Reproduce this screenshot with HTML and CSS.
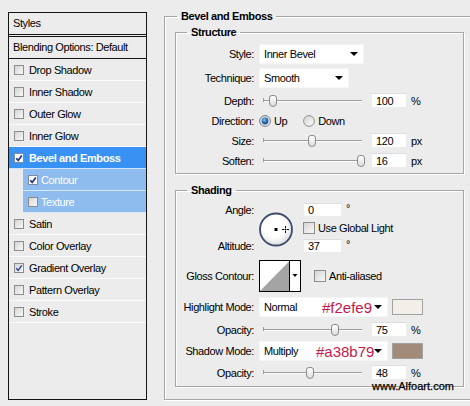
FILE: index.html
```html
<!DOCTYPE html>
<html>
<head>
<meta charset="utf-8">
<link rel="stylesheet" href="styles.css">
</head>
<body>
<div class="page">
  <div class="styles-panel">
    <div class="panel-head">Styles</div>
    <div class="panel-blend">Blending Options: Default</div>
    <div class="style-row"><span class="cb"></span>Drop Shadow</div>
    <div class="style-row"><span class="cb"></span>Inner Shadow</div>
    <div class="style-row"><span class="cb"></span>Outer Glow</div>
    <div class="style-row"><span class="cb"></span>Inner Glow</div>
    <div class="style-row sel"><span class="cb on"><svg viewBox="0 0 8 8" width="8" height="8"><path d="M1.2 4.2 L3.2 6.4 L6.8 1.4" fill="none" stroke="#1d3284" stroke-width="1.7"/></svg></span>Bevel and Emboss</div>
    <div class="style-row sub"><span class="cb on"><svg viewBox="0 0 8 8" width="8" height="8"><path d="M1.2 4.2 L3.2 6.4 L6.8 1.4" fill="none" stroke="#1d3284" stroke-width="1.7"/></svg></span>Contour</div>
    <div class="style-row sub"><span class="cb"></span>Texture</div>
    <div class="style-row"><span class="cb"></span>Satin</div>
    <div class="style-row"><span class="cb"></span>Color Overlay</div>
    <div class="style-row"><span class="cb"><svg viewBox="0 0 8 8" width="8" height="8"><path d="M1.2 4.2 L3.2 6.4 L6.8 1.4" fill="none" stroke="#2a4a9a" stroke-width="1.5"/></svg></span>Gradient Overlay</div>
    <div class="style-row"><span class="cb"></span>Pattern Overlay</div>
    <div class="style-row"><span class="cb"></span>Stroke</div>
  </div>

  <fieldset class="group outer">
    <legend>Bevel and Emboss</legend>

    <fieldset class="group inner structure">
      <legend>Structure</legend>
      <div class="row h20 first">
        <span class="lbl">Style:</span>
        <div class="select w-style"><span>Inner Bevel</span><i class="arrow"></i></div>
      </div>
      <div class="row h20 gap4">
        <span class="lbl">Technique:</span>
        <div class="select w-tech"><span>Smooth</span><i class="arrow"></i></div>
      </div>
      <div class="row h15 gap5">
        <span class="lbl">Depth:</span>
        <div class="slider"><span class="thumb" style="left:10px"></span></div>
        <span class="num">100</span><span class="unit">%</span>
      </div>
      <div class="row h15 gap5">
        <span class="lbl">Direction:</span>
        <svg class="radio" width="12" height="12" viewBox="0 0 12 12">
          <defs>
            <radialGradient id="rb" cx="0.4" cy="0.35" r="0.7"><stop offset="0" stop-color="#8fc3ef"/><stop offset="0.5" stop-color="#2b74b8"/><stop offset="1" stop-color="#0f3f70"/></radialGradient>
            <linearGradient id="rg" x1="0" y1="0" x2="1" y2="1"><stop offset="0" stop-color="#d4d4d4"/><stop offset="1" stop-color="#fbfbfb"/></linearGradient>
          </defs>
          <circle cx="6" cy="6" r="5.4" fill="url(#rg)" stroke="#6f7b8c" stroke-width="1"/>
          <circle cx="6" cy="6" r="3.4" fill="url(#rb)"/>
        </svg>
        <span class="radio-text">Up</span>
        <svg class="radio down" width="12" height="12" viewBox="0 0 12 12">
          <circle cx="6" cy="6" r="5.4" fill="url(#rg)" stroke="#8f8f8f" stroke-width="1"/>
        </svg>
        <span class="radio-text">Down</span>
      </div>
      <div class="row h15 gap5">
        <span class="lbl">Size:</span>
        <div class="slider"><span class="thumb" style="left:49px"></span></div>
        <span class="num">120</span><span class="unit">px</span>
      </div>
      <div class="row h15 gap5">
        <span class="lbl">Soften:</span>
        <div class="slider"><span class="thumb" style="left:98px"></span></div>
        <span class="num">16</span><span class="unit">px</span>
      </div>
    </fieldset>

    <fieldset class="group inner shading">
      <legend>Shading</legend>
      <div class="angle">
        <div class="angle-labels">
          <span>Angle:</span>
          <span>Altitude:</span>
        </div>
        <svg class="dial" width="36" height="36" viewBox="0 0 36 36">
          <defs>
            <radialGradient id="dg" cx="0.45" cy="0.4" r="0.6"><stop offset="0.6" stop-color="#ffffff"/><stop offset="1" stop-color="#d9dbe0"/></radialGradient>
          </defs>
          <circle cx="18" cy="17.5" r="16" fill="url(#dg)" stroke="#3e4c6b" stroke-width="1.8"/>
          <rect x="16.5" y="16" width="3" height="3" fill="#000"/>
          <g stroke="#000" stroke-width="1">
            <line x1="24" y1="17.5" x2="26.5" y2="17.5"/>
            <line x1="28.5" y1="17.5" x2="31" y2="17.5"/>
            <line x1="27.5" y1="14" x2="27.5" y2="16.5"/>
            <line x1="27.5" y1="18.5" x2="27.5" y2="21"/>
          </g>
          <rect x="27" y="17" width="1" height="1" fill="#000"/>
        </svg>
        <div class="angle-fields">
          <div class="row h14"><span class="num wide">0</span><span class="unit deg">°</span></div>
          <div class="row h14"><span class="cb big"></span><span class="cb-text">Use Global Light</span></div>
          <div class="row h14"><span class="num wide">37</span><span class="unit deg">°</span></div>
        </div>
      </div>
      <div class="row gloss">
        <span class="lbl">Gloss Contour:</span>
        <svg class="contour" width="42" height="32" viewBox="0 0 42 32">
          <rect x="0.5" y="0.5" width="41" height="31" fill="#fff" stroke="#000"/>
          <polygon points="1,31 30,1.5 30,31" fill="#a4a4a4"/>
          <line x1="30.5" y1="0.5" x2="30.5" y2="31.5" stroke="#000"/>
          <polygon points="33.5,14 38.5,14 36,17" fill="#000"/>
        </svg>
        <span class="cb big anti"></span><span class="cb-text">Anti-aliased</span>
      </div>
      <div class="row h20 gap5">
        <span class="lbl">Highlight Mode:</span>
        <div class="select w-mode"><span>Normal</span><span class="hex hex1">#f2efe9</span><i class="arrow"></i></div>
        <span class="swatch sw1"></span>
      </div>
      <div class="row h15 gap5">
        <span class="lbl">Opacity:</span>
        <div class="slider"><span class="thumb" style="left:72px"></span></div>
        <span class="num">75</span><span class="unit">%</span>
      </div>
      <div class="row h20 gap4">
        <span class="lbl">Shadow Mode:</span>
        <div class="select w-mode"><span>Multiply</span><span class="hex hex2">#a38b79</span><i class="arrow"></i></div>
        <span class="swatch sw2"></span>
      </div>
      <div class="row h15 gap4">
        <span class="lbl">Opacity:</span>
        <div class="slider"><span class="thumb" style="left:47px"></span></div>
        <span class="num">48</span><span class="unit">%</span>
      </div>
    </fieldset>
  </fieldset>
</div>
<div class="watermark">www.Alfoart.com</div>
</body>
</html>
```

FILE: styles.css
```css
* { box-sizing: border-box; }
html, body { margin: 0; padding: 0; }
body {
  position: relative;
  width: 470px;
  height: 406px;
  overflow: hidden;
  background: #ececec;
  font-family: "Liberation Sans", Arial, sans-serif;
  font-size: 11px;
  letter-spacing: -0.4px;
  color: #000;
}
.page { display: flex; align-items: flex-start; }

/* left styles list */
.styles-panel {
  flex: none;
  margin: 12px 0 0 8px;
  width: 139px;
  height: 388px;
  border: 1px solid #141414;
  background: #ececec;
}
.panel-head {
  height: 24px;
  line-height: 21px;
  padding-left: 4px;
  border-bottom: 3px double #141414;
}
.panel-blend {
  height: 22px;
  line-height: 21px;
  padding-left: 4px;
  border-bottom: 1px solid #141414;
}
.style-row {
  display: flex;
  align-items: center;
  gap: 5px;
  height: 22px;
  padding-left: 5px;
  border-bottom: 1px solid #fbfbfb;
  white-space: nowrap;
}
.style-row.sel {
  background: #3892f3;
  color: #fff;
  font-weight: bold;
  border-bottom-color: #cfe3fb;
}
.style-row.sub {
  margin-left: 14px;
  padding-left: 5px;
  gap: 3px;
  background: #8ebcef;
  color: #fff;
  border-bottom-color: #d6e7fa;
}
.cb {
  flex: none;
  display: flex;
  align-items: center;
  justify-content: center;
  width: 10px;
  height: 10px;
  border: 1px solid #8d8d8d;
  background: linear-gradient(135deg, #d5d5d5, #f8f8f8);
}
.cb.on { background: #fff; border-color: #7d8aa0; }
.cb.big { width: 12px; height: 12px; }
.cb-text { margin-left: 3px; white-space: nowrap; }

/* fieldsets */
.group {
  margin: 0;
  min-width: 0;
  border: 1px solid #a6a6a6;
  box-shadow: inset 1px 1px 0 #fff, 1px 1px 0 #fff;
}
.group > legend {
  padding: 0 4px;
  font-weight: bold;
  line-height: 13px;
}
.outer {
  flex: none;
  width: 306px;
  margin: 10px 0 0 17px;
  padding: 3px 0 12px 10px;
  border-right: none;
  box-shadow: inset 1px 1px 0 #fff, 0 1px 0 #fff;
}
.outer > legend { margin-left: 2px; }
.inner { width: 289px; padding: 0 0 5px 0; }
.inner > legend { margin-left: 11px; }
.shading { margin-top: 10px; padding: 6px 0 6px 0; }

.row { display: flex; align-items: center; white-space: nowrap; }
.h20 { height: 20px; }
.h15 { height: 15px; }
.h14 { height: 14px; }
.first { margin-top: 5px; }
.gap4 { margin-top: 4px; }
.gap5 { margin-top: 5px; }
.lbl {
  flex: none;
  width: 78px;
  margin-right: 5px;
  text-align: right;
}

.select {
  flex: none;
  position: relative;
  display: flex;
  align-items: center;
  justify-content: space-between;
  height: 20px;
  padding: 0 5px 0 4px;
  background: #fff;
  border: 1px solid #f6f6f6;
}
.w-style { width: 105px; }
.w-tech { width: 90px; }
.w-mode { width: 129px; }
.arrow {
  width: 0;
  height: 0;
  border-left: 4px solid transparent;
  border-right: 4px solid transparent;
  border-top: 4px solid #000;
}
.hex {
  position: absolute;
  top: 1px;
  font-family: Arial, "Liberation Sans", sans-serif;
  font-size: 15px;
  letter-spacing: 0;
  line-height: 17px;
  color: #c61a4c;
}
.hex1 { left: 62px; }
.hex2 { left: 56px; }
.swatch {
  flex: none;
  width: 31px;
  height: 16px;
  margin-left: 4px;
  border: 1px solid #a2a2a2;
}
.sw1 { background: #f2efe9; }
.sw2 { background: #a38b79; }

.slider {
  flex: none;
  position: relative;
  width: 108px;
  height: 15px;
}
.slider::before {
  content: "";
  position: absolute;
  left: 4px;
  right: 5px;
  top: 7px;
  height: 1px;
  background: #9c9c9c;
  box-shadow: 0 1px 0 #fff;
}
.slider::after {
  content: "";
  position: absolute;
  left: 4px;
  top: 5px;
  width: 1px;
  height: 4px;
  background: #9c9c9c;
}
.thumb {
  position: absolute;
  top: 2px;
  width: 8px;
  height: 12px;
  border: 1px solid #8a8a8a;
  border-radius: 3px 3px 4px 4px;
  background: linear-gradient(#ffffff, #dcdcdc);
}
.num {
  flex: none;
  width: 36px;
  height: 15px;
  margin-left: 4px;
  padding-left: 4px;
  line-height: 14px;
  background: #fff;
  border: 1px solid #ececec;
  border-top-color: #dedede;
}
.num.wide { width: 39px; height: 14px; margin-left: 0; line-height: 13px; }
.unit { margin-left: 4px; }
.unit.deg { align-self: flex-start; line-height: 10px; }

.radio { flex: none; }
.radio-text { margin-left: 3px; }
.radio.down { margin-left: 16px; }

.angle { display: flex; height: 50px; }
.angle-labels {
  flex: none;
  width: 78px;
  margin-right: 5px;
  display: flex;
  flex-direction: column;
  justify-content: space-between;
  text-align: right;
  line-height: 14px;
}
.dial { flex: none; margin-top: 9px; margin-left: -1px; }
.angle-fields {
  margin-left: 9px;
  display: flex;
  flex-direction: column;
  gap: 4px;
}
.gloss { height: 32px; margin-top: 7px; }
.contour { flex: none; }
.anti { margin-left: 13px; height: 13px; }

.watermark {
  position: absolute;
  left: 372px;
  top: 380px;
  font-family: Arial, "Liberation Sans", sans-serif;
  font-size: 11px;
  letter-spacing: 0;
  line-height: 13px;
  color: #000;
  -webkit-text-stroke: 0.25px #000;
}
```
